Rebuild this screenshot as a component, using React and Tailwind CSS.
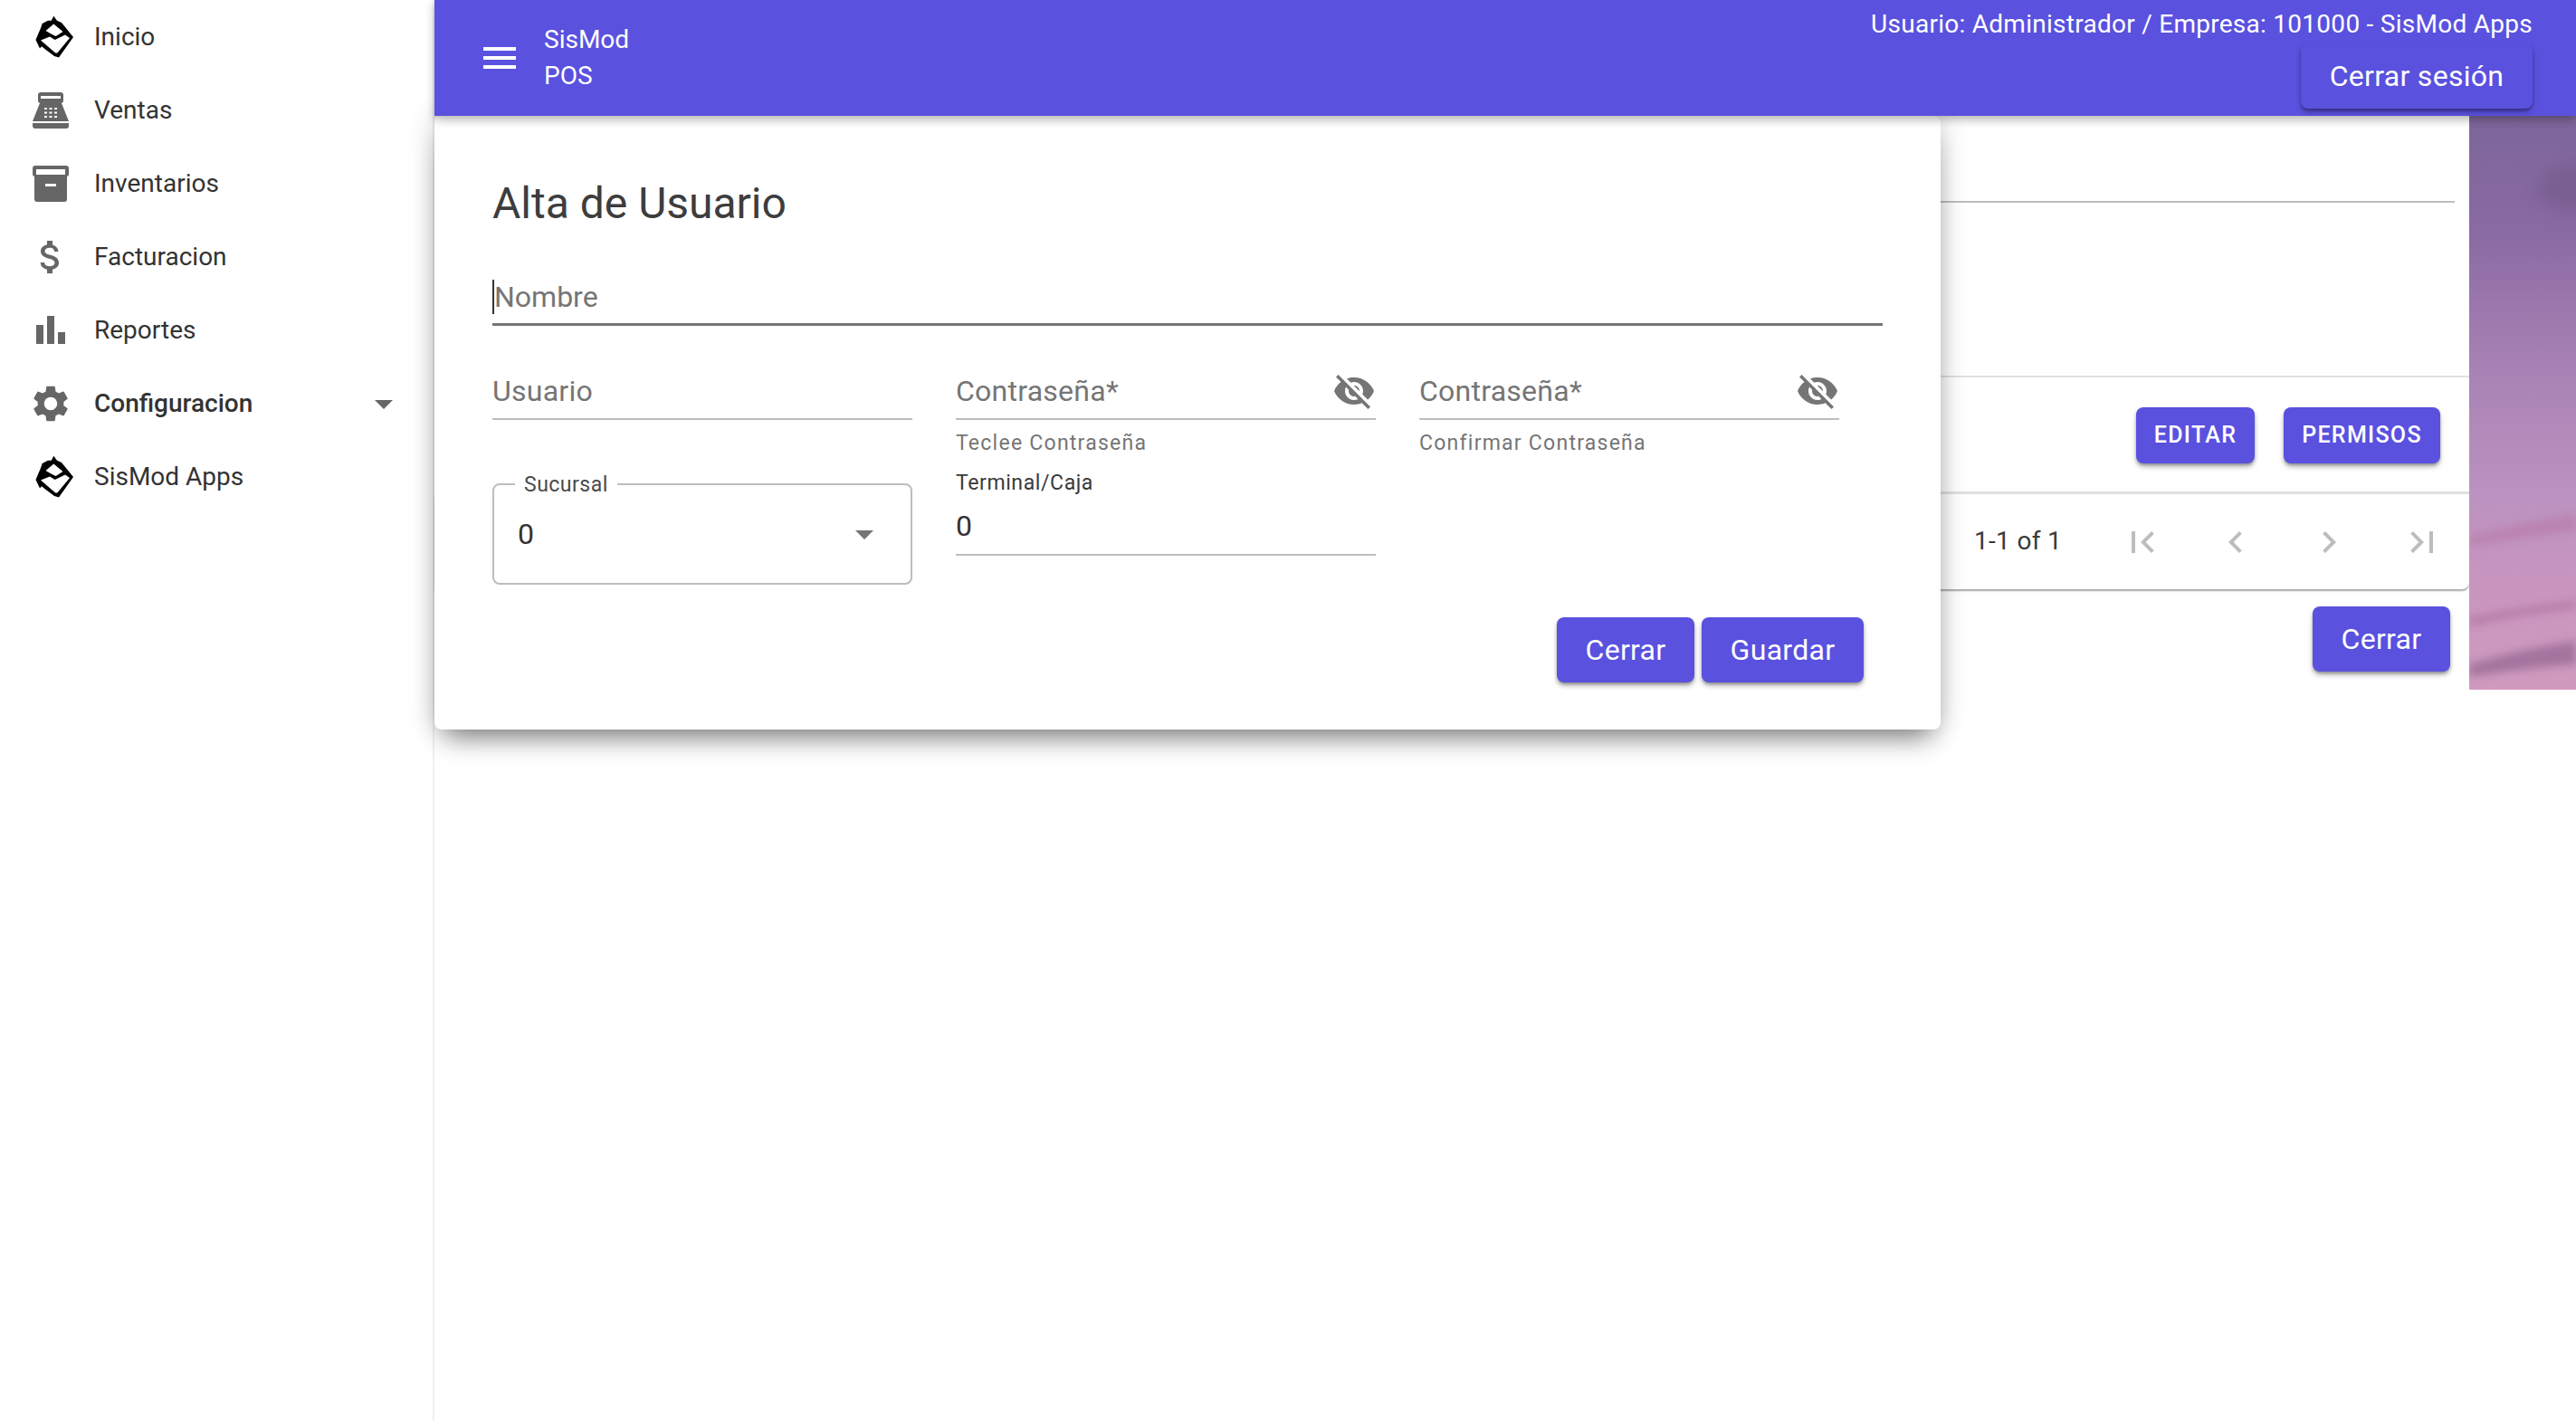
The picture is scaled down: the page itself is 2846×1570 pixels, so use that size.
import React from "react";

const Ico = ({ d, size = "w-[48px] h-[48px]", color = "#666666" }) => (
  <svg viewBox="0 0 24 24" className={`${size} shrink-0`} fill={color}>
    <path d={d} />
  </svg>
);

const PATHS = {
  menu: "M3 18h18v-2H3v2zm0-5h18v-2H3v2zm0-7v2h18V6H3z",
  money:
    "M11.8 10.9c-2.27-.59-3-1.2-3-2.15 0-1.09 1.01-1.85 2.7-1.85 1.78 0 2.44.85 2.5 2.1h2.21c-.07-1.72-1.12-3.3-3.21-3.81V3h-3v2.16c-1.94.42-3.5 1.68-3.5 3.61 0 2.31 1.91 3.46 4.7 4.13 2.5.6 3 1.48 3 2.41 0 .69-.49 1.79-2.7 1.79-2.06 0-2.87-.92-2.98-2.1h-2.2c.12 2.19 1.76 3.42 3.68 3.83V21h3v-2.15c1.95-.37 3.5-1.5 3.5-3.55 0-2.84-2.43-3.81-4.7-4.4z",
  gear: "M19.14 12.94c.04-.3.06-.61.06-.94 0-.32-.02-.64-.07-.94l2.03-1.58c.18-.14.23-.41.12-.61l-1.92-3.32c-.12-.22-.37-.29-.59-.22l-2.39.96c-.5-.38-1.03-.7-1.62-.94l-.36-2.54c-.04-.24-.24-.41-.48-.41h-3.84c-.24 0-.43.17-.47.41l-.36 2.54c-.59.24-1.13.57-1.62.94l-2.39-.96c-.22-.08-.47 0-.59.22L2.74 8.87c-.12.21-.08.47.12.61l2.03 1.58c-.05.3-.09.63-.09.94s.02.64.07.94l-2.03 1.58c-.18.14-.23.41-.12.61l1.92 3.32c.12.22.37.29.59.22l2.39-.96c.5.38 1.03.7 1.62.94l.36 2.54c.05.24.24.41.48.41h3.84c.24 0 .44-.17.47-.41l.36-2.54c.59-.24 1.13-.56 1.62-.94l2.39.96c.22.08.47 0 .59-.22l1.92-3.32c.12-.22.07-.47-.12-.61l-2.01-1.58zM12 15.6c-1.98 0-3.6-1.62-3.6-3.6s1.62-3.6 3.6-3.6 3.6 1.62 3.6 3.6-1.62 3.6-3.6 3.6z",
  eyeOff:
    "M12 7c2.76 0 5 2.24 5 5 0 .65-.13 1.26-.36 1.83l2.92 2.92c1.51-1.26 2.7-2.89 3.43-4.75-1.73-4.39-6-7.5-11-7.5-1.4 0-2.74.25-3.98.7l2.16 2.16C10.74 7.13 11.35 7 12 7zM2 4.27l2.28 2.28.46.46C3.08 8.3 1.78 10.02 1 12c1.73 4.39 6 7.5 11 7.5 1.55 0 3.03-.3 4.38-.84l.42.42L19.73 22 21 20.73 3.27 3 2 4.27zM7.53 9.8l1.55 1.55c-.05.21-.08.43-.08.65 0 1.66 1.34 3 3 3 .22 0 .44-.03.65-.08l1.55 1.55c-.67.33-1.41.53-2.2.53-2.76 0-5-2.24-5-5 0-.79.2-1.53.53-2.2zm4.31-.78l3.15 3.15.02-.16c0-1.66-1.34-3-3-3l-.17.01z",
  drop: "M7 10l5 5 5-5z",
  first: "M18.41 16.59L13.82 12l4.59-4.59L17 6l-6 6 6 6zM6 6h2v12H6z",
  prev: "M15.41 16.59L10.83 12l4.58-4.59L14 6l-6 6 6 6 1.41-1.41z",
  next: "M8.59 16.59L13.17 12 8.59 7.41 10 6l6 6-6 6-1.41-1.41z",
  last: "M5.59 7.41L10.18 12l-4.59 4.59L7 18l6-6-6-6zM16 6h2v12h-2z",
};

const Logo = () => (
  <svg viewBox="0 0 60 60" className="w-[60px] h-[60px] shrink-0">
    <path
      fillRule="evenodd"
      fill="#000"
      d="M29.3 6.700L33 11.700L38 14L51 30L35 52.500L30 51L20 43.500L16 40.300L14 42.500L9.500 33L15 20L16.700 15L23 11.700L26.700 11.700zM20.500 23L29.300 15.500L39.500 24L31.700 29L27.500 27zM15 33.500L25 29.500L30.700 33L42 27.500L47 31L33.300 47.500L31.200 47.500z"
    />
  </svg>
);

const Register = () => (
  <svg viewBox="0 0 40 40" className="w-[40px] h-[40px]" fill="#666666">
    <rect x="6" y="0" width="28" height="12" rx="3" />
    <rect x="9" y="4" width="22" height="3" fill="#fff" />
    <path d="M8 12h24l8 20H0z" />
    <path d="M0 34h40v3a3 3 0 0 1-3 3H3a3 3 0 0 1-3-3z" />
    <g fill="#fff">
      <rect x="13" y="17" width="3" height="2" />
      <rect x="18.5" y="17" width="3" height="2" />
      <rect x="24" y="17" width="3" height="2" />
      <rect x="13" y="21.500" width="3" height="2" />
      <rect x="18.5" y="21.500" width="3" height="2" />
      <rect x="24" y="21.500" width="3" height="2" />
      <rect x="13" y="26" width="3" height="2" />
      <rect x="18.5" y="26" width="3" height="2" />
      <rect x="24" y="26" width="3" height="2" />
    </g>
  </svg>
);

const Box = () => (
  <svg viewBox="0 0 40 40" className="w-[40px] h-[40px]" fill="#666666">
    <path d="M3 0h34a3 3 0 0 1 3 3v7a3 3 0 0 1-2 2v25a3 3 0 0 1-3 3H5a3 3 0 0 1-3-3V12a3 3 0 0 1-2-2V3a3 3 0 0 1 3-3z" />
    <rect x="4" y="4" width="32" height="6" fill="#fff" />
    <rect x="14" y="20" width="12" height="3" fill="#fff" />
  </svg>
);

const Bars = () => (
  <svg viewBox="0 0 32 31" className="w-[32px] h-[31px]" fill="#666666">
    <rect x="0" y="10" width="8" height="21" />
    <rect x="12" y="0" width="8" height="31" />
    <rect x="24" y="18" width="8" height="13" />
  </svg>
);

const NAV_ITEMS = [
  { label: "Inicio", icon: <div className="ml-[-2px] mr-[-10px] flex"><Logo /></div> },
  { label: "Ventas", icon: <Register /> },
  { label: "Inventarios", icon: <Box /> },
  { label: "Facturacion", icon: <Ico d={PATHS.money} /> },
  { label: "Reportes", icon: <Bars /> },
  { label: "Configuracion", icon: <Ico d={PATHS.gear} />, active: true },
  { label: "SisMod Apps", icon: <div className="ml-[-2px] mr-[-10px] flex"><Logo /></div> },
];

function Sidebar() {
  return (
    <aside className="w-[480px] shrink-0 border-r-2 border-[#f0f0f0] bg-white">
      {NAV_ITEMS.map(({ label, icon, active }) => (
        <div key={label} className="flex h-[81px] items-center pr-[30px]">
          <div className="flex w-[104px] shrink-0 items-center justify-center pl-[8px]">{icon}</div>
          <span className={`text-[28px] text-[#333333] ${active ? "font-medium" : ""}`}>{label}</span>
          {active && (
            <div className="ml-auto flex">
              <Ico d={PATHS.drop} />
            </div>
          )}
        </div>
      ))}
    </aside>
  );
}

function Btn({ children, className = "" }) {
  return (
    <button
      className={`flex items-center justify-center rounded-[8px] bg-[#5a51df] text-white shadow-[0_4px_6px_-1px_rgba(0,0,0,0.35),0_2px_3px_rgba(0,0,0,0.2)] ${className}`}
    >
      {children}
    </button>
  );
}

function Header() {
  return (
    <header className="relative z-20 flex h-[128px] bg-[#5a51df] text-white shadow-[0_4px_10px_rgba(0,0,0,0.3)]">
      <div className="flex items-center pl-[48px]">
        <Ico d={PATHS.menu} color="#ffffff" />
        <div className="ml-[25px] text-[28px] leading-[40px]">
          <div>SisMod</div>
          <div>POS</div>
        </div>
      </div>
      <div className="ml-auto flex flex-col items-end pr-[48px]">
        <div className="h-[48px] pt-[7px] text-[28px] leading-[40px] tracking-[0.27px]">
          Usuario: Administrador / Empresa: 101000 - SisMod Apps
        </div>
        <Btn className="h-[72px] w-[256px] text-[32px] tracking-[0.3px]">Cerrar sesión</Btn>
      </div>
    </header>
  );
}

function Backdrop() {
  return (
    <svg viewBox="0 0 118 634" preserveAspectRatio="none" className="h-[634px] w-[118px] shrink-0">
      <defs>
        <linearGradient id="sky" x1="0" y1="0" x2="0" y2="1">
          <stop offset="0" stopColor="#7c6699" />
          <stop offset="0.2" stopColor="#8a6aa3" />
          <stop offset="0.45" stopColor="#a983b5" />
          <stop offset="0.66" stopColor="#bb92c0" />
          <stop offset="0.8" stopColor="#c795bf" />
          <stop offset="1" stopColor="#d09abe" />
        </linearGradient>
        <filter id="soft" x="-50%" y="-200%" width="200%" height="500%">
          <feGaussianBlur stdDeviation="10" />
        </filter>
        <filter id="thin" x="-50%" y="-200%" width="200%" height="500%">
          <feGaussianBlur stdDeviation="5" />
        </filter>
      </defs>
      <rect width="118" height="634" fill="url(#sky)" />
      <ellipse cx="118" cy="80" rx="44" ry="26" fill="#6c5382" opacity="0.45" filter="url(#soft)" />
      <path d="M0 464 Q60 450 118 440 L118 458 Q60 466 0 476z" fill="#b5739f" opacity="0.5" filter="url(#thin)" />
      <path d="M0 554 Q60 542 118 536 L118 544 Q60 550 0 564z" fill="#a56596" opacity="0.55" filter="url(#thin)" />
      <path d="M0 606 Q60 588 118 580 L118 606 Q60 610 0 620z" fill="#9a6c96" opacity="0.8" filter="url(#thin)" />
    </svg>
  );
}

function BackPanel() {
  return (
    <div className="flex items-start">
      <div className="w-[2248px] shrink-0 rounded-tr-[8px] bg-white">
        <div className="h-[289px] border-b-2 border-[#e0e0e0] pr-[16px]">
          <div className="h-[96px] border-b-2 border-[#bdbdbd]" />
        </div>
        <div className="flex h-[129px] items-center justify-end gap-[32px] border-b-[3px] border-[#e0e0e0] pr-[32px] pt-[2px]">
          <Btn className="h-[62px] w-[131px] text-[25px] font-medium tracking-[1.3px]">EDITAR</Btn>
          <Btn className="h-[62px] w-[173px] text-[25px] font-medium tracking-[1.3px]">PERMISOS</Btn>
        </div>
        <div className="flex h-[105px] items-center justify-end rounded-br-[8px] pr-[28px] shadow-[0_2px_2px_rgba(0,0,0,0.35)]">
          <span className="mr-[65px] pb-[2px] text-[28px] tracking-[0.3px] text-[#3a3a3a]">1-1 of 1</span>
          <div className="flex gap-[55px]">
            <Ico d={PATHS.first} color="#bdbdbd" />
            <Ico d={PATHS.prev} color="#bdbdbd" />
            <Ico d={PATHS.next} color="#bdbdbd" />
            <Ico d={PATHS.last} color="#bdbdbd" />
          </div>
        </div>
        <div className="flex h-[111px] justify-end pr-[21px] pt-[19px]">
          <Btn className="h-[72px] w-[152px] text-[32px] tracking-[0.3px]">Cerrar</Btn>
        </div>
      </div>
      <Backdrop />
    </div>
  );
}

function Field({ label, eye, helper }) {
  return (
    <div>
      <div className="flex h-[60px] items-center justify-between border-b-2 border-[#bdbdbd] pb-[2px]">
        <span className="text-[32px] tracking-[0.25px] text-[#757575]">{label}</span>
        {eye && <Ico d={PATHS.eyeOff} color="#757575" />}
      </div>
      {helper && (
        <div className="mt-[11px] text-[23px] leading-[30px] tracking-[1.25px] text-[#757575]">{helper}</div>
      )}
    </div>
  );
}

function Dialog() {
  return (
    <div className="absolute left-0 top-0 z-10 h-[678px] w-[1664px] rounded-[8px] bg-white px-[64px] shadow-[0_20px_28px_-12px_rgba(0,0,0,0.45),0_0_30px_rgba(0,0,0,0.2)]">
      <h2 className="pt-[65px] text-[48px] leading-[64px] text-[#3d3d3d]">Alta de Usuario</h2>
      <div className="mt-[43px] flex h-[60px] items-center border-b-[3px] border-[#757575] pb-[2px]">
        <span className="h-[38px] w-[2px] bg-[#333]" />
        <span className="text-[32px] text-[#757575]">Nombre</span>
      </div>
      <div className="mt-[44px] grid grid-cols-[464px_464px_464px] gap-x-[48px]">
        <div>
          <Field label="Usuario" />
          <div className="relative mt-[70px] flex h-[112px] items-center justify-between rounded-[8px] border-2 border-[#bdbdbd] pl-[26px] pr-[27px]">
            <span className="absolute -top-[15px] left-[23px] bg-white px-[10px] text-[23px] leading-[30px] tracking-[0.5px] text-[#4a4a4a]">
              Sucursal
            </span>
            <span className="text-[32px] text-[#333]">0</span>
            <Ico d={PATHS.drop} color="#757575" />
          </div>
        </div>
        <div>
          <Field label="Contraseña*" eye helper="Teclee Contraseña" />
          <div className="mt-[14px] text-[23px] leading-[30px] tracking-[0.6px] text-[#3a3a3a]">Terminal/Caja</div>
          <div className="flex h-[65px] items-center border-b-2 border-[#bdbdbd]">
            <span className="text-[32px] text-[#333]">0</span>
          </div>
        </div>
        <Field label="Contraseña*" eye helper="Confirmar Contraseña" />
      </div>
      <div className="mt-[36px] flex justify-end gap-[8px] pr-[21px]">
        <Btn className="h-[72px] w-[152px] text-[32px] tracking-[0.3px]">Cerrar</Btn>
        <Btn className="h-[72px] w-[179px] text-[32px] tracking-[0.3px]">Guardar</Btn>
      </div>
    </div>
  );
}

export default function App() {
  return (
    <div className="flex h-[1570px] w-[2846px] overflow-hidden bg-white font-['Roboto',sans-serif]">
      <Sidebar />
      <div className="min-w-0 flex-1">
        <Header />
        <main className="relative">
          <BackPanel />
          <Dialog />
        </main>
      </div>
    </div>
  );
}
